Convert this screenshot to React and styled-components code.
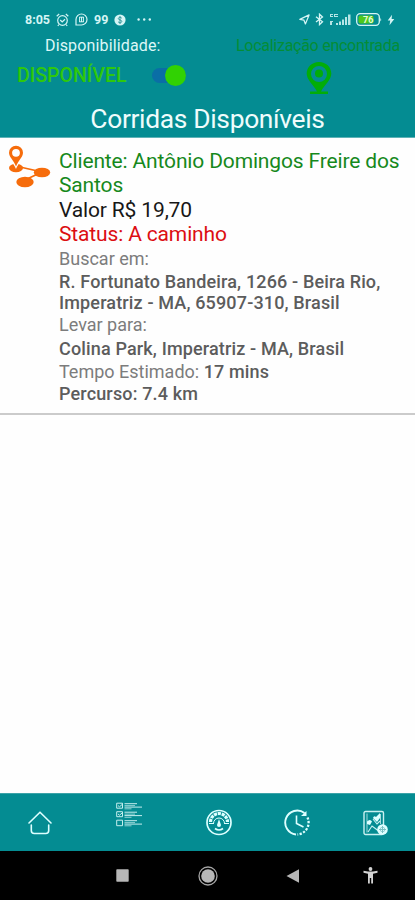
import React from "react";
import styled, { createGlobalStyle } from "styled-components";

const GlobalStyle = createGlobalStyle`
  * { box-sizing: border-box; }
  body { margin: 0; font-family: Roboto, "Liberation Sans", sans-serif; background: #fefefe; }
  svg { display: block; flex: none; }
`;

const Screen = styled.div`
  width: 415px;
  height: 900px;
  display: flex;
  flex-direction: column;
  overflow: hidden;
  background: #fefefe;
`;

const Header = styled.header`
  height: 138px;
  flex: none;
  display: flex;
  flex-direction: column;
  background: #048c92;
  border-bottom: 1px solid #5fb2b6;
`;

const StatusBar = styled.div`
  height: 36px;
  flex: none;
  padding: 3px 20px 0 25px;
  display: flex;
  align-items: center;
  justify-content: space-between;
  color: #d5f5f5;
`;

const StatusGroup = styled.div`
  display: flex;
  align-items: center;
  gap: ${(p) => p.$gap}px;
`;

const StatusText = styled.span`
  font-size: 12.5px;
  line-height: 16px;
  font-weight: 700;
`;

const Availability = styled.div`
  height: 63px;
  flex: none;
  display: grid;
  grid-template-columns: 207px 208px;
`;

const Column = styled.div`
  display: flex;
  flex-direction: column;
  white-space: nowrap;
`;

const Label = styled.div`
  height: 20px;
  line-height: 20px;
  font-size: 16px;
  padding-left: ${(p) => p.$left}px;
  color: ${(p) => p.$color};
  letter-spacing: ${(p) => p.$spacing}px;
`;

const ToggleRow = styled.div`
  height: 38px;
  padding-left: 17px;
  display: flex;
  align-items: center;
`;

const ToggleText = styled.span`
  width: 135px;
  font-size: 19.5px;
  font-weight: 500;
  color: #2ec80c;
`;

const Track = styled.span`
  width: 34px;
  height: 15px;
  border-radius: 8px;
  background: #0a6ea6;
  display: flex;
  align-items: center;
  justify-content: flex-end;
`;

const Knob = styled.span`
  width: 21px;
  height: 21px;
  flex: none;
  border-radius: 50%;
  background: #31d203;
`;

const PinRow = styled.div`
  padding: 6px 0 0 99px;
`;

const Title = styled.h1`
  margin: 2px 0 0;
  height: 36px;
  line-height: 36px;
  font-size: 26.4px;
  letter-spacing: -0.33px;
  font-weight: 400;
  text-align: center;
  color: #effcfc;
  white-space: nowrap;
`;

const Ride = styled.article`
  height: 277px;
  flex: none;
  display: grid;
  grid-template-columns: 59px 356px;
  border-bottom: 2px solid #cbcbcb;
`;

const RideIcon = styled.div`
  padding: 7px 0 0 8px;
`;

const Details = styled.div`
  padding-top: 11px;
  white-space: nowrap;
`;

const Main = styled.div`
  font-size: 21px;
  line-height: 24.3px;
  color: ${(p) => p.$color};
  letter-spacing: -0.15px;
`;

const Line = styled.div`
  font-size: 18px;
  height: ${(p) => p.$height}px;
  line-height: ${(p) => p.$height}px;
  color: #7c7c7c;
`;

const Strong = styled.strong`
  font-weight: 500;
  color: #5c5c5c;
  letter-spacing: 0.15px;
`;

const Content = styled.main`
  flex: 1;
`;

const TabBar = styled.nav`
  height: 58px;
  flex: none;
  display: grid;
  grid-template-columns: 79px 100px 79px 78px 79px;
  background: #048c92;
  border-top: 1px solid #3ba3a8;
`;

const Tab = styled.div`
  display: flex;
  justify-content: center;
  padding-top: ${(p) => p.$top}px;
`;

const SystemBar = styled.div`
  height: 49px;
  flex: none;
  display: grid;
  grid-template-columns: 79px 86px 86px 84px 70px;
  align-items: center;
  background: #000;
`;

const SystemKey = styled.div`
  display: flex;
  justify-content: center;
`;

const AlarmIcon = () => (
  <svg width="13" height="14" viewBox="0 0 13 14" fill="none" stroke="currentColor">
    <circle cx="6.5" cy="7.5" r="4.8" strokeWidth="1.2" />
    <path d="M.7 3.2 3.2 1M12.3 3.2 9.8 1M4.2 7l2 2 2.8-2.7M3 11.5 1.8 13M10 11.5l1.2 1.5" strokeWidth="1.2" />
  </svg>
);

const ChatIcon = () => (
  <svg width="13" height="13" viewBox="0 0 13 13" fill="none" stroke="currentColor">
    <path d="M1 12V6.5a5.500 5.500 0 1 1 5.500 5.500Z" strokeWidth="1.2" />
    <path d="M4.600 4v5M6.500 4v5M8.400 4v5M4.300 4.200h4.400M4.300 8.800h4.400" strokeWidth="1" />
  </svg>
);

const CoinIcon = () => (
  <svg width="12" height="12" viewBox="0 0 12 12">
    <circle cx="6" cy="6" r="5.6" fill="currentColor" />
    <path d="M7.8 4.2C7 3 4.3 3.1 4.3 4.6c0 1.7 3.5 1 3.5 2.8C7.800 9 5 9.200 4.100 7.800M6 2v8" fill="none" stroke="#37989c" strokeWidth="1" />
  </svg>
);

const DotsIcon = () => (
  <svg width="20" height="4" viewBox="0 0 20 4" fill="currentColor">
    <circle cx="6.600" cy="1.500" r="1.200" /><circle cx="12.200" cy="1.500" r="1.200" /><circle cx="17.800" cy="1.500" r="1.200" />
  </svg>
);

const SendIcon = () => (
  <svg width="11" height="11" viewBox="0 0 11 11" fill="none" stroke="currentColor" strokeWidth="1.2" strokeLinejoin="round">
    <path d="M.8 5.400 10.100.9 6.400 10 5 6.200Z" />
  </svg>
);

const BluetoothIcon = () => (
  <svg width="9" height="13" viewBox="0 0 9 13" fill="none" stroke="currentColor" strokeWidth="1.300">
    <path d="m1 3.700 6.500 5L4.500 11.600V1.200l3 2.800-6.500 5" />
  </svg>
);

const SignalIcon = () => (
  <svg width="22" height="13" viewBox="0 0 22 13" fill="currentColor">
    <path d="M1 1h3v1H2v1h2v1H1zM5 1h4v1H6v1h3v1H5zM1 8h3v1H3v3H1zM7 10h2v2H7zM10 8.500h2V12h-2zM13 6.500h2V12h-2zM16 4h2v8h-2zM19 1.500h2.500V12H19z" opacity=".85" />
  </svg>
);

const BatteryIcon = () => (
  <svg width="26" height="13" viewBox="0 0 26 13">
    <rect x=".7" y=".7" width="22.600" height="11.600" rx="3.500" fill="none" stroke="currentColor" strokeWidth="1.300" />
    <rect x="2.500" y="2.500" width="15" height="8" rx="2" fill="#4dc91d" />
    <path d="M24.300 4.500q1.600 2 0 4z" fill="currentColor" />
    <text x="12.200" y="9.800" fontSize="9" fontWeight="700" textAnchor="middle" fill="#e5fbdc">76</text>
  </svg>
);

const BoltIcon = () => (
  <svg width="8" height="12" viewBox="0 0 8 12" fill="currentColor"><path d="M5 .8.700 6.600h2.500L2.500 11.200 7.300 5.100H4.600Z" /></svg>
);

const LocationIcon = () => (
  <svg width="26" height="33" viewBox="0 0 26 33">
    <path fill="#02ad08" fillRule="evenodd" d="M13 0C6 0 .7 5 .7 11.500.7 18 7 22 11 29.500H4V32h18v-2.500h-7C19 22 25.300 18 25.300 11.500 25.300 5 20 0 13 0Zm0 4a8 8 0 0 1 0 16 8 8 0 0 1 0-16Z" />
    <circle cx="13" cy="11.500" r="4" fill="#02ad08" />
  </svg>
);

const RouteIcon = () => (
  <svg width="44" height="44" viewBox="0 0 44 44">
    <path d="m12 22 22 5-15 7" fill="none" stroke="#f66c0b" strokeWidth="1.700" />
    <ellipse cx="8" cy="23" rx="7" ry="4.200" fill="#f66c0b" />
    <ellipse cx="34" cy="27.500" rx="8.200" ry="4.800" fill="#f66c0b" />
    <ellipse cx="17" cy="37" rx="8.700" ry="5.200" fill="#f66c0b" />
    <path d="M8 24C6 19 0 13 0 7.800a8 8 0 0 1 16 0C16 13 10 19 8 24Z" fill="#fefefe" />
    <path d="M8 21.500C6 16 1 12 1 7.800a7 7 0 0 1 14 0C15 12 10 16 8 21.500Z" fill="#f66c0b" />
    <circle cx="8" cy="7.800" r="3.900" fill="#fefefe" />
  </svg>
);

const HomeIcon = () => (
  <svg width="24" height="24" viewBox="0 0 24 24" fill="none" stroke="#dff" strokeWidth="1.600" strokeLinecap="round" strokeLinejoin="round">
    <path d="M1 12 12 1.200 23 12M3.300 14v5.500q0 3 3 3h11.400q3 0 3-3V14" />
  </svg>
);

const ListIcon = () => (
  <svg width="26" height="25" viewBox="0 0 26 25" fill="none" stroke="#c5eeee">
    <path d="M.7 1.200h5.800v5H.7zM.7 9.700h5.800v5H.7zM.7 18.200h5.800v5.500H.7zM2 3.600l1.500 1.200L7 1.700M2 12l1.500 1.200L7 10.200" />
    <path d="M8.500 1.700H21M8.500 10.200H21M8.500 18.700H21" />
    <path d="M8.500 3.600H19M8.500 12.100H19M8.500 20.600H19" strokeWidth=".7" />
    <path d="M8.500 5.100H26M8.500 13.600H26M8.500 22.100H26" />
    <path d="M8.500 6.800h7M8.500 15.300h7M8.500 23.800h7" strokeWidth=".7" />
  </svg>
);

const GaugeIcon = () => (
  <svg width="26" height="27" viewBox="0 0 26 27" fill="none" stroke="#dff">
    <circle cx="13" cy="13.500" r="12" strokeWidth="1.700" />
    <path d="M4.500 13a8.500 8.500 0 0 1 17 0" strokeWidth="3.200" strokeDasharray="3.200 .8" />
    <path d="M7.500 14.500a5.500 5.500 0 0 1 11 0M3 14.500h5M18 14.500h5" strokeWidth="1" />
    <path d="m13 10-2 6a2 2 0 0 0 4 0Z" fill="#dff" stroke="none" />
    <path d="M9 19.500q4 3 8 0" strokeWidth="1.600" />
  </svg>
);

const ClockIcon = () => (
  <svg width="26" height="27" viewBox="0 0 26 27" fill="none" stroke="#dff">
    <path d="M12 25.500A12 12 0 1 1 20.500 4" strokeWidth="1.900" />
    <path d="M22.500 2v5h-5.500z" fill="#dff" stroke="none" />
    <path d="M12.500 6.500v8l7 3.500" strokeWidth="1.600" />
    <path d="M23.500 8.500a12 12 0 0 1-10 17" strokeWidth="2.300" strokeDasharray="2.200 1.500" />
  </svg>
);

const MapIcon = () => (
  <svg width="26" height="26" viewBox="0 0 26 26" fill="none" stroke="#c9f1f1">
    <rect x="1" y="1.500" width="19.500" height="23" rx="1.500" strokeWidth="1.400" />
    <path d="M4 3.500v19M17.500 4v10" strokeWidth=".8" />
    <path d="m5 22 4-6 4 3 5 4M10 9l4 5 3-3" strokeWidth="1.100" />
    <path d="M4 11.500q3-3 5 0L7 15l-3-1zM10 8q1-3 3-1l4-4v5l-3 4z" fill="#dff" stroke="none" />
    <circle cx="19.500" cy="19.500" r="5.300" fill="#dff" stroke="none" />
    <path d="M19.500 16v7M16 19.500h7" stroke="#7abfc2" strokeWidth="1" />
    <circle cx="19.500" cy="19.500" r="2.300" stroke="#7abfc2" strokeWidth=".7" />
  </svg>
);

const RecentsIcon = () => <svg width="13" height="13" viewBox="0 0 13 13"><rect x=".3" y=".3" width="12.400" height="12.400" rx=".7" fill="#b7b7b7" /></svg>;
const CircleIcon = () => (
  <svg width="20" height="20" viewBox="0 0 20 20">
    <circle cx="10" cy="10" r="9" fill="none" stroke="#a5a5a5" strokeWidth="1.300" /><circle cx="10" cy="10" r="6.800" fill="#b7b7b7" />
  </svg>
);
const BackIcon = () => <svg width="14" height="14" viewBox="0 0 14 14"><path d="M.5 7 13 .3v13.400Z" fill="#b7b7b7" /></svg>;
const AccessibilityIcon = () => (
  <svg width="15" height="17" viewBox="0 0 15 17" fill="#d2d2d2">
    <circle cx="7.500" cy="2" r="1.900" /><path d="M.5 3.800 5 4.500h5l4.500-.7v2L10 6.800v9.700H8.200V11H6.800v5.500H5V6.800L.5 5.800Z" />
  </svg>
);

export default function App() {
  return (
    <Screen>
      <GlobalStyle />
      <Header>
        <StatusBar>
          <StatusGroup $gap={6}>
            <StatusText>8:05</StatusText>
            <AlarmIcon />
            <ChatIcon />
            <StatusText>99</StatusText>
            <CoinIcon />
            <DotsIcon />
          </StatusGroup>
          <StatusGroup $gap={5}>
            <SendIcon />
            <BluetoothIcon />
            <SignalIcon />
            <BatteryIcon />
            <BoltIcon />
          </StatusGroup>
        </StatusBar>
        <Availability>
          <Column>
            <Label $left={45} $color="#dcf7f7" $spacing={0.15}>Disponibilidade:</Label>
            <ToggleRow>
              <ToggleText>DISPONÍVEL</ToggleText>
              <Track><Knob /></Track>
            </ToggleRow>
          </Column>
          <Column>
            <Label $left={29} $color="#048d36" $spacing={-0.27}>Localização encontrada</Label>
            <PinRow><LocationIcon /></PinRow>
          </Column>
        </Availability>
        <Title>Corridas Disponíveis</Title>
      </Header>
      <Ride>
        <RideIcon><RouteIcon /></RideIcon>
        <Details>
          <Main $color="#16891c">Cliente: Antônio Domingos Freire dos<br />Santos</Main>
          <Main $color="#171717">Valor R$ 19,70</Main>
          <Main $color="#dc0e12">Status: A caminho</Main>
          <Line $height={25}>Buscar em:</Line>
          <Line $height={21}><Strong>R. Fortunato Bandeira, 1266 - Beira Rio,</Strong></Line>
          <Line $height={22}><Strong>Imperatriz - MA, 65907-310, Brasil</Strong></Line>
          <Line $height={22}>Levar para:</Line>
          <Line $height={25}><Strong>Colina Park, Imperatriz - MA, Brasil</Strong></Line>
          <Line $height={22}>Tempo Estimado: <Strong>17 mins</Strong></Line>
          <Line $height={22}><Strong>Percurso: 7.4 km</Strong></Line>
        </Details>
      </Ride>
      <Content />
      <TabBar>
        <Tab $top={17}><HomeIcon /></Tab>
        <Tab $top={8}><ListIcon /></Tab>
        <Tab $top={15}><GaugeIcon /></Tab>
        <Tab $top={15}><ClockIcon /></Tab>
        <Tab $top={16}><MapIcon /></Tab>
      </TabBar>
      <SystemBar>
        <SystemKey />
        <SystemKey><RecentsIcon /></SystemKey>
        <SystemKey><CircleIcon /></SystemKey>
        <SystemKey><BackIcon /></SystemKey>
        <SystemKey><AccessibilityIcon /></SystemKey>
      </SystemBar>
    </Screen>
  );
}
